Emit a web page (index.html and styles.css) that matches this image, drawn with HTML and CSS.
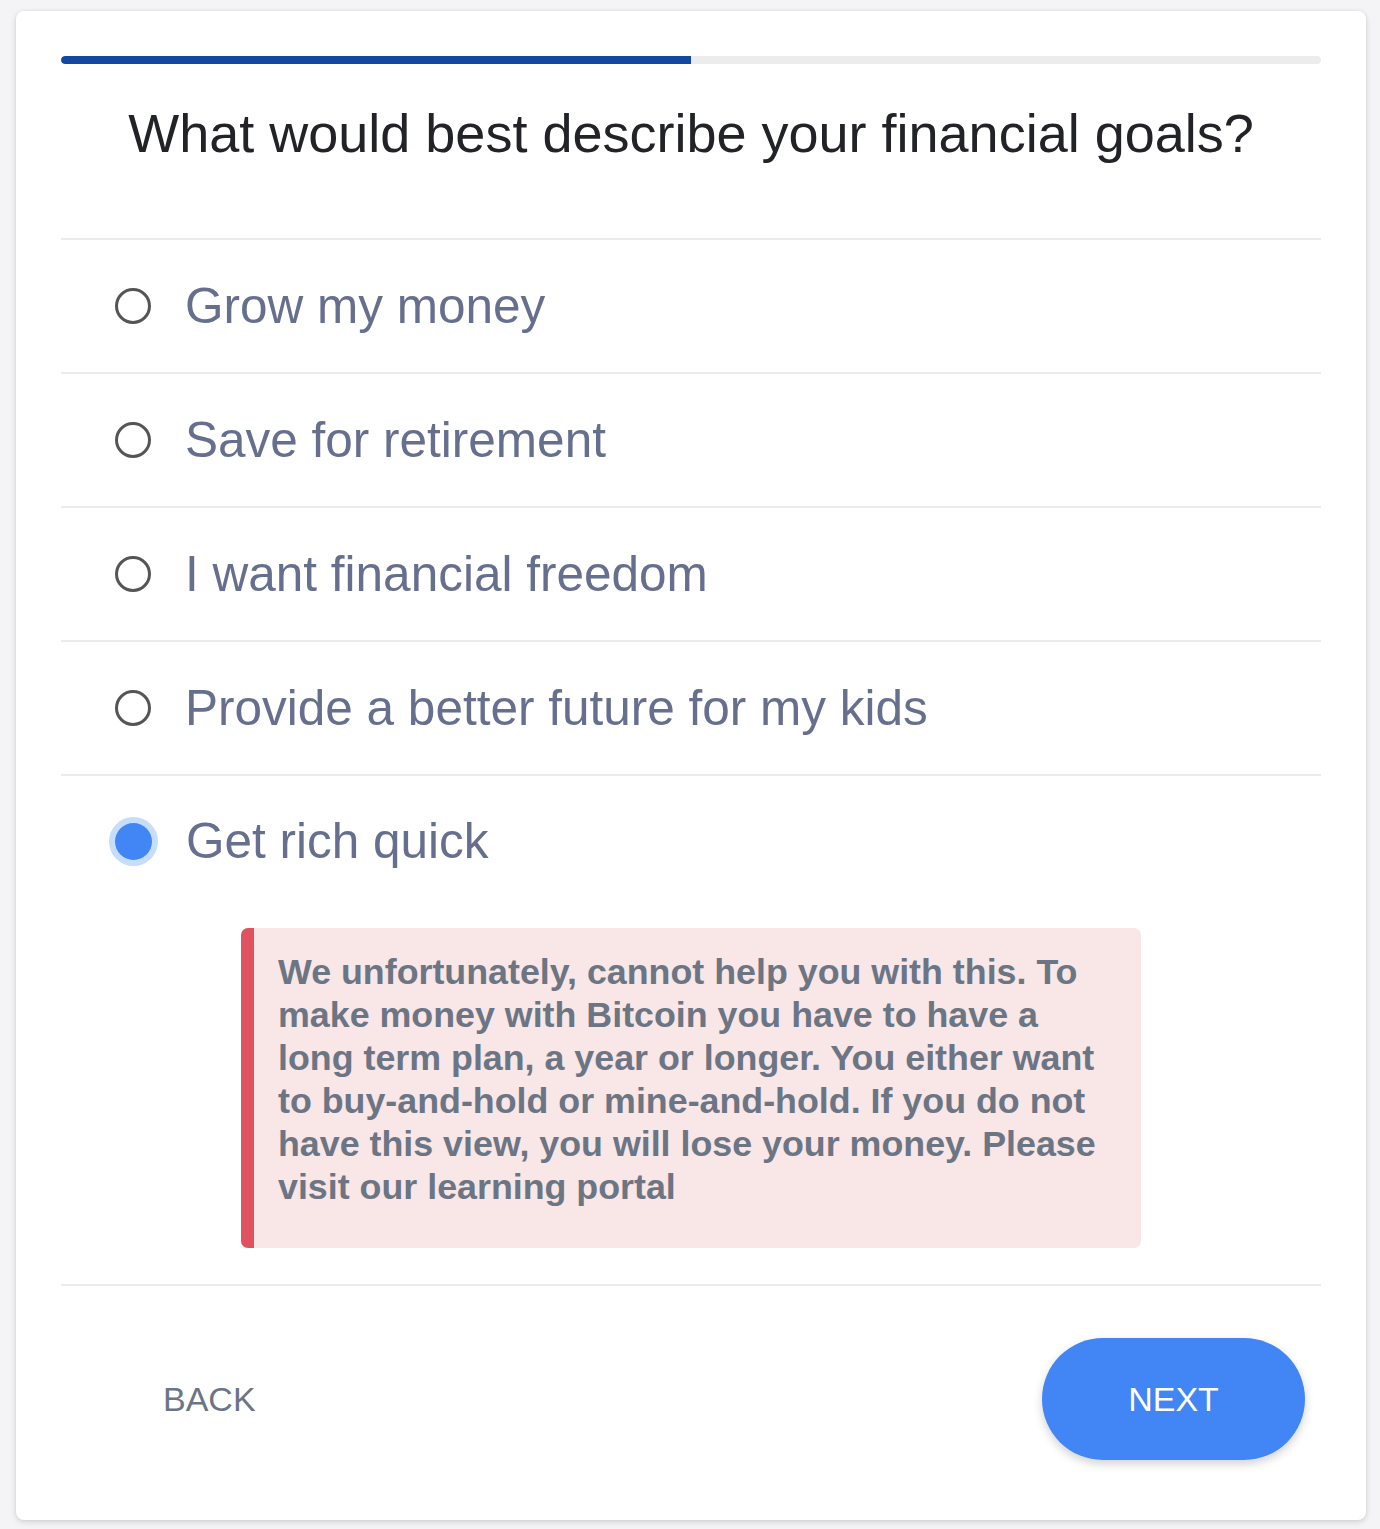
FILE: index.html
```html
<!DOCTYPE html>
<html lang="en">
<head>
<meta charset="utf-8">
<title>Financial goals</title>
<link rel="stylesheet" href="styles.css">
</head>
<body>
<div class="card">
  <div class="progress"><div class="progress-fill" style="width:50%"></div></div>
  <h1 class="question">What would best describe your financial goals?</h1>
  <div class="options">
    <label class="option"><span class="radio"></span><span class="option-text">Grow my money</span></label>
    <label class="option"><span class="radio"></span><span class="option-text">Save for retirement</span></label>
    <label class="option"><span class="radio"></span><span class="option-text">I want financial freedom</span></label>
    <label class="option"><span class="radio"></span><span class="option-text">Provide a better future for my kids</span></label>
    <div class="option option-selected">
      <label class="option-row"><span class="radio radio-checked"></span><span class="option-text">Get rich quick</span></label>
      <div class="alert">We unfortunately, cannot help you with this. To make money with Bitcoin you have to have a long term plan, a year or longer. You either want to buy-and-hold or mine-and-hold. If you do not have this view, you will lose your money. Please visit our learning portal</div>
    </div>
  </div>
  <div class="footer">
    <button class="btn-back">BACK</button>
    <button class="btn-next">NEXT</button>
  </div>
</div>
</body>
</html>
```

FILE: styles.css
```css
html, body {
  margin: 0;
  padding: 0;
  background: #f4f4f6;
  font-family: "Liberation Sans", Arial, sans-serif;
}
body {
  padding: 11px 14px 9px 16px;
}
.card {
  background: #fff;
  border-radius: 8px;
  box-shadow: 0 2px 6px rgba(0,0,0,0.14), 0 0 3px rgba(0,0,0,0.06);
  padding: 45px 45px 0 45px;
  height: 1464px;
}
.progress {
  height: 8px;
  background: #ececec;
  border-radius: 4px;
  overflow: hidden;
}
.progress-fill {
  height: 100%;
  background: #1447a0;
  border-radius: 4px 0 0 4px;
}
.question {
  margin: 0;
  padding: 38px 0 0;
  height: 174px;
  box-sizing: border-box;
  text-align: center;
  font-weight: 400;
  font-size: 54px;
  line-height: 62px;
  color: #212327;
}
.options {
  border-top: 2px solid #ebebeb;
}
.option {
  display: flex;
  align-items: center;
  height: 132px;
  border-bottom: 2px solid #ebebeb;
  padding-left: 54px;
  gap: 34px;
}
.option-selected {
  display: block;
  height: auto;
  padding-left: 0;
  padding-bottom: 36px;
}
.option-row {
  display: flex;
  align-items: center;
  height: 130px;
  padding-left: 54px;
  gap: 34px;
}
.radio {
  width: 30px;
  height: 30px;
  border: 3.5px solid #555;
  border-radius: 50%;
  flex: none;
}
.radio-checked {
  width: 37px;
  height: 37px;
  border: none;
  background: #4285f4;
  box-shadow: 0 0 0 6px #c7ddfc;
}
.option-text {
  font-size: 49.5px;
  color: #676f8f;
  line-height: 1;
}
.alert {
  margin: 22px 180px 0 180px;
  background: #f9e6e6;
  border-left: 13px solid #e05260;
  border-radius: 7px;
  padding: 23px 30px 39px 24px;
  font-weight: 700;
  font-size: 35.8px;
  line-height: 43px;
  color: #6b7583;
}
.footer {
  display: flex;
  align-items: center;
  justify-content: space-between;
  padding: 52px 16px 0 60px;
}
.btn-back {
  border: none;
  background: none;
  font-family: inherit;
  font-size: 34px;
  color: #6b7583;
  padding: 0 42px;
  height: 122px;
}
.btn-next {
  border: none;
  background: #4285f4;
  color: #fff;
  font-family: inherit;
  font-size: 34px;
  width: 263px;
  height: 122px;
  border-radius: 61px;
  box-shadow: 0 4px 10px rgba(0,0,0,0.18);
}
```
